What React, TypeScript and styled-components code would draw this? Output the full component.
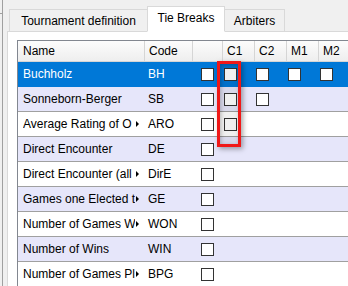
import styled, { createGlobalStyle } from "styled-components";

const GlobalStyle = createGlobalStyle`
  html, body {
    margin: 0;
    padding: 0;
    background: #f0f0f0;
    overflow: hidden;
  }
  body {
    font-family: "Liberation Sans", Arial, sans-serif;
    font-size: 12px;
    color: #000;
  }
`;

interface ITieBreak {
  name: string; // text as it fits in the column
  fullName: string;
  code: string;
  truncated?: boolean;
  checks: boolean[]; // blank, C1, C2, M1, M2
}

const tieBreaks: ITieBreak[] = [
  { name: "Buchholz", fullName: "Buchholz", code: "BH", checks: [true, true, true, true, true] },
  { name: "Sonneborn-Berger", fullName: "Sonneborn-Berger", code: "SB", checks: [true, true, true, false, false] },
  { name: "Average Rating of O", fullName: "Average Rating of Opponents", code: "ARO", truncated: true, checks: [true, true, false, false, false] },
  { name: "Direct Encounter", fullName: "Direct Encounter", code: "DE", checks: [true, false, false, false, false] },
  { name: "Direct Encounter (all", fullName: "Direct Encounter (all players)", code: "DirE", truncated: true, checks: [true, false, false, false, false] },
  { name: "Games one Elected t", fullName: "Games one Elected to Play", code: "GE", truncated: true, checks: [true, false, false, false, false] },
  { name: "Number of Games W", fullName: "Number of Games Won", code: "WON", truncated: true, checks: [true, false, false, false, false] },
  { name: "Number of Wins", fullName: "Number of Wins", code: "WIN", checks: [true, false, false, false, false] },
  { name: "Number of Games Pl", fullName: "Number of Games Played", code: "BPG", truncated: true, checks: [true, false, false, false, false] },
];

const columns = [
  { key: "name", label: "Name", width: 127 },
  { key: "code", label: "Code", width: 48 },
  { key: "blank", label: "", width: 30 },
  { key: "c1", label: "C1", width: 32 },
  { key: "c2", label: "C2", width: 32 },
  { key: "m1", label: "M1", width: 32 },
  { key: "m2", label: "M2", width: 32 },
];

const App = () => {
  return (
    <>
      <GlobalStyle />
      <Window>
        <LeftEdge>
          <div className="corner" />
        </LeftEdge>
        <Main>
          <TabStrip>
            <Tab $width={139}>Tournament definition</Tab>
            <Tab $width={78} $active>
              Tie Breaks
            </Tab>
            <Tab $width={61}>Arbiters</Tab>
          </TabStrip>
          <Panel>
            <Table>
              <HeaderRow>
                {columns.map((col, i) => (
                  <HeaderCell key={col.key} $width={col.width} $pad={i === 0 ? 5 : 4}>
                    {col.label}
                  </HeaderCell>
                ))}
              </HeaderRow>
              {tieBreaks.map((tb, index) => (
                <Row key={tb.code} $selected={index === 0} $alt={index % 2 === 1}>
                  <NameCell $width={columns[0].width} title={tb.fullName}>
                    <span className="text">{tb.name}</span>
                    {tb.truncated && <MoreArrow />}
                  </NameCell>
                  <Cell $width={columns[1].width} $pad={3}>
                    {tb.code}
                  </Cell>
                  {tb.checks.map((checked, i) => (
                    <Cell key={i} $width={columns[i + 2].width} $pad={i === 0 ? 8 : 1}>
                      {checked && <CheckBox />}
                    </Cell>
                  ))}
                </Row>
              ))}
              <Highlight />
            </Table>
          </Panel>
        </Main>
      </Window>
    </>
  );
};

const Window = styled.div`
  display: flex;
  width: 348px;
  height: 286px;
  overflow: hidden;
  background: #f0f0f0;
`;

const LeftEdge = styled.div`
  width: 2px;
  flex-shrink: 0;
  border-right: 1px solid #a0a0a0;
  .corner {
    height: 13px;
    border-bottom: 1px solid #a0a0a0;
  }
`;

const Main = styled.div`
  flex: 1;
  display: flex;
  flex-direction: column;
  padding-left: 4px;
  min-width: 0;
`;

const TabStrip = styled.div`
  display: flex;
  align-items: flex-end;
  height: 32px;
  padding-left: 2px;
  border-bottom: 1px solid #d9d9d9;
  box-sizing: border-box;
  flex-shrink: 0;
`;

const Tab = styled.div<{ $width: number; $active?: boolean }>`
  display: flex;
  align-items: center;
  justify-content: center;
  box-sizing: border-box;
  width: ${(p) => p.$width}px;
  height: ${(p) => (p.$active ? 26 : 23)}px;
  margin-bottom: -1px;
  padding-bottom: ${(p) => (p.$active ? 3 : 0)}px;
  background: ${(p) => (p.$active ? "#ffffff" : "#f0f0f0")};
  border: 1px solid #d9d9d9;
  border-bottom: ${(p) => (p.$active ? "1px solid #ffffff" : "1px solid #d9d9d9")};
  white-space: nowrap;
  position: relative;
  z-index: ${(p) => (p.$active ? 1 : 0)};
  & + & {
    margin-left: -1px;
  }
`;

const Panel = styled.div`
  flex: 1;
  background: #ffffff;
  border-left: 1px solid #d9d9d9;
  padding: 8px 0 0 9px;
  min-height: 0;
`;

const Table = styled.div`
  position: relative;
  border-top: 1px solid #828790;
  border-left: 1px solid #828790;
  width: 400px;
`;

const HeaderRow = styled.div`
  display: flex;
  height: 21px;
  box-sizing: border-box;
  border-bottom: 1px solid #d5d5d5;
  background: linear-gradient(to bottom, #fcfcfc, #eeeeee);
`;

const HeaderCell = styled.div<{ $width: number; $pad: number }>`
  box-sizing: border-box;
  width: ${(p) => p.$width}px;
  flex-shrink: 0;
  padding-left: ${(p) => p.$pad}px;
  border-right: 1px solid #d5d5d5;
  display: flex;
  align-items: center;
`;

const Row = styled.div<{ $selected?: boolean; $alt?: boolean }>`
  display: flex;
  height: 25px;
  box-sizing: border-box;
  border-bottom: 1px solid ${(p) => (p.$selected ? "#0078d7" : "#a0a0a0")};
  background: ${(p) => (p.$selected ? "#0078d7" : p.$alt ? "#e6e6fa" : "#ffffff")};
  color: ${(p) => (p.$selected ? "#ffffff" : "#000000")};
`;

const Cell = styled.div<{ $width: number; $pad: number }>`
  box-sizing: border-box;
  width: ${(p) => p.$width}px;
  flex-shrink: 0;
  padding-left: ${(p) => p.$pad}px;
  display: flex;
  align-items: center;
  white-space: nowrap;
`;

const NameCell = styled.div<{ $width: number }>`
  box-sizing: border-box;
  width: ${(p) => p.$width}px;
  flex-shrink: 0;
  padding-left: 5px;
  display: flex;
  align-items: center;
  .text {
    width: 112px;
    overflow: hidden;
    white-space: nowrap;
  }
`;

const MoreArrow = styled.span`
  margin-left: 1px;
  width: 0;
  height: 0;
  border-left: 3px solid currentColor;
  border-top: 3px solid transparent;
  border-bottom: 3px solid transparent;
`;

const CheckBox = styled.span`
  display: block;
  width: 13px;
  height: 13px;
  box-sizing: border-box;
  border: 1px solid #333333;
  background: #ffffff;
`;

const Highlight = styled.div`
  position: absolute;
  left: 199px;
  top: 20px;
  width: 24px;
  height: 86px;
  box-sizing: border-box;
  border: 3px solid #f01818;
  background: rgba(0, 0, 0, 0.06);
  box-shadow: 2px 2px 5px rgba(0, 0, 0, 0.35), inset 1px 1px 4px rgba(0, 0, 0, 0.25);
  pointer-events: none;
`;

export default App;
